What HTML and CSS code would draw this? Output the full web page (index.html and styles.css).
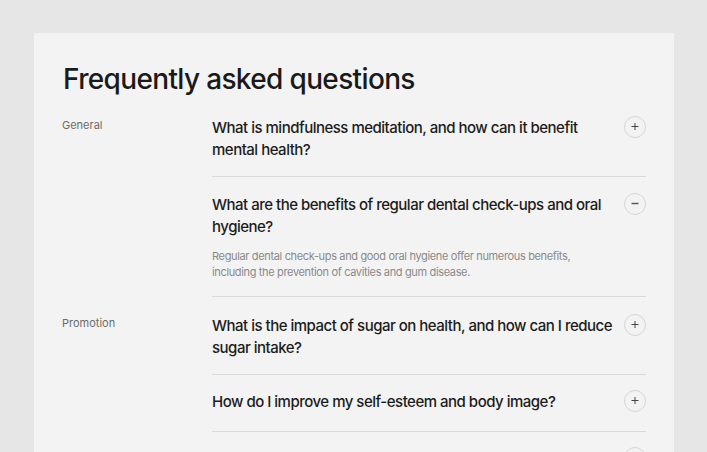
FILE: index.html
```html
<!DOCTYPE html>
<html lang="en">
<head>
<meta charset="utf-8">
<title>FAQ</title>
<link rel="stylesheet" href="styles.css">
</head>
<body>
<main class="card">
  <h1 class="title">Frequently asked questions</h1>
  <section class="group">
    <div class="group-label">General</div>
    <div class="items">
      <div class="item">
        <div class="q-row">
          <h3 class="question">What is mindfulness meditation, and how can it benefit mental health?</h3>
          <span class="toggle"><svg viewBox="0 0 22 22" width="22" height="22"><path d="M7.5 10.5h7M11 7v7" stroke="#444" stroke-width="1" fill="none"/></svg></span>
        </div>
      </div>
      <div class="item">
        <div class="q-row">
          <h3 class="question">What are the benefits of regular dental check-ups and oral hygiene?</h3>
          <span class="toggle"><svg viewBox="0 0 22 22" width="22" height="22"><path d="M7.5 10.5h7" stroke="#555" stroke-width="1.4" fill="none"/></svg></span>
        </div>
        <p class="answer">Regular dental check-ups and good oral hygiene offer numerous benefits, including the prevention of cavities and gum disease.</p>
      </div>
    </div>
  </section>
  <section class="group">
    <div class="group-label">Promotion</div>
    <div class="items">
      <div class="item">
        <div class="q-row">
          <h3 class="question">What is the impact of sugar on health, and how can I reduce sugar intake?</h3>
          <span class="toggle"><svg viewBox="0 0 22 22" width="22" height="22"><path d="M7.5 10.5h7M11 7v7" stroke="#444" stroke-width="1" fill="none"/></svg></span>
        </div>
      </div>
      <div class="item item--single">
        <div class="q-row">
          <h3 class="question">How do I improve my self-esteem and body image?</h3>
          <span class="toggle"><svg viewBox="0 0 22 22" width="22" height="22"><path d="M7.5 10.5h7M11 7v7" stroke="#444" stroke-width="1" fill="none"/></svg></span>
        </div>
      </div>
      <div class="item item--single">
        <div class="q-row">
          <h3 class="question">How can I manage stress in a healthy way?</h3>
          <span class="toggle"><svg viewBox="0 0 22 22" width="22" height="22"><path d="M7.5 10.5h7M11 7v7" stroke="#444" stroke-width="1" fill="none"/></svg></span>
        </div>
      </div>
    </div>
  </section>
</main>
</body>
</html>
```

FILE: styles.css
```css
html, body {
  margin: 0;
  padding: 0;
}
body {
  background: #e6e6e6;
  font-family: Inter, "Noto Sans", sans-serif;
  color: #1c1c1c;
  height: 452px;
  overflow: hidden;
  padding: 33px 33px 0 34px;
  box-sizing: border-box;
}
.card {
  background: #f3f3f3;
  padding: 29px 28px 28px 28px;
  min-height: 500px;
}
.title {
  margin: 0 0 21px 1px;
  font-size: 28px;
  font-weight: 500;
  letter-spacing: -0.65px;
  line-height: 34px;
  color: #1a1a1a;
}
.group {
  display: grid;
  grid-template-columns: 150px 1fr;
}
.group + .group {
  padding-top: 18px;
}
.group-label {
  font-size: 11px;
  line-height: 16px;
  color: #6b6b6b;
}
.item {
  border-bottom: 1px solid #d9d9d9;
  padding: 17px 0 15px;
}
.item--single {
  padding: 16px 0 18px;
}
.item:first-child {
  padding-top: 0;
}
.q-row {
  display: flex;
  align-items: flex-start;
  gap: 8px;
}
.question {
  flex: 1;
  margin: 0;
  font-size: 15px;
  font-weight: 500;
  line-height: 22px;
  letter-spacing: -0.5px;
  color: #1c1c1c;
}
.toggle {
  flex: none;
  width: 22px;
  height: 22px;
  margin-top: -1px;
  border: 1px solid #d6d6d6;
  border-radius: 50%;
  box-sizing: border-box;
  display: flex;
  align-items: center;
  justify-content: center;
}
.toggle svg {
  display: block;
  flex: none;
}
.answer {
  margin: 10px 0 1px;
  font-size: 11px;
  line-height: 16px;
  color: #8a8a8a;
  letter-spacing: -0.35px;
  max-width: 370px;
}
```
